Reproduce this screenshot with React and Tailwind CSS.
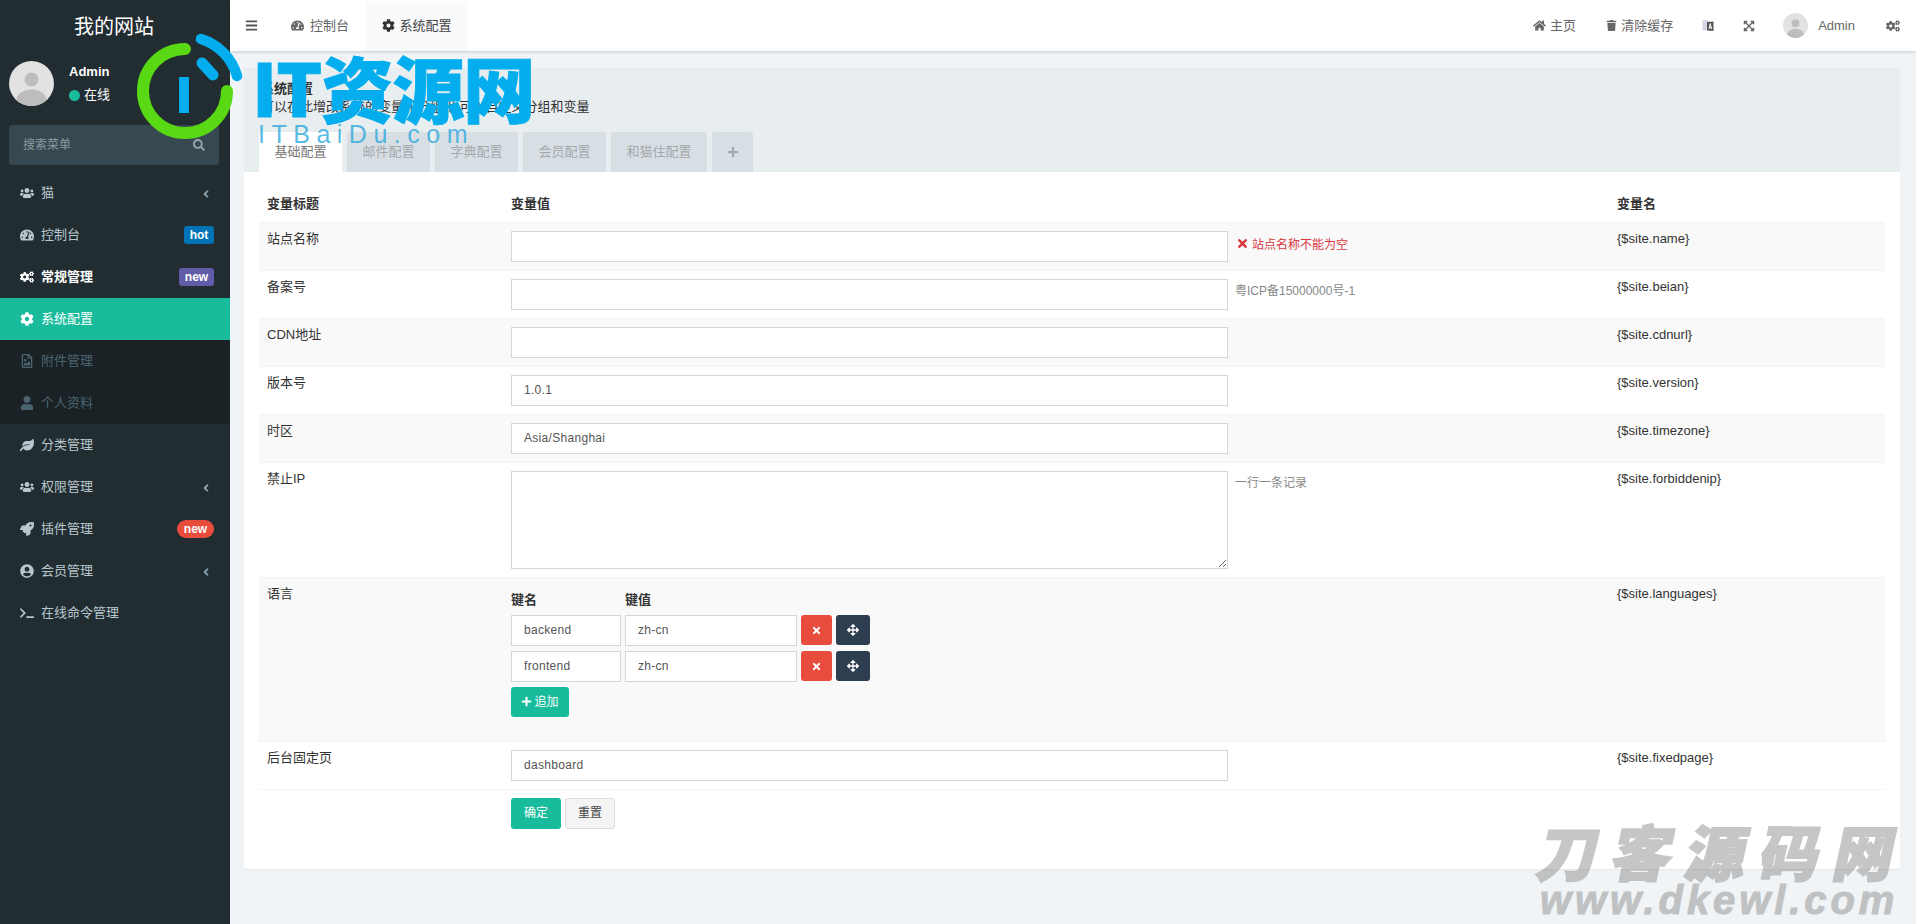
import {
  FaAngleLeft, FaArrowsAlt, FaBars, FaCog, FaCogs, FaExpandArrowsAlt, FaHome, FaLeaf,
  FaPlus, FaRegFileImage, FaRocket, FaSearch, FaTachometerAlt, FaTerminal, FaTimes, FaTrash,
  FaUser, FaUserCircle, FaUsers,
} from 'react-icons/fa';

const menu = [
  { icon: FaUsers, label: '猫', arrow: true },
  { icon: FaTachometerAlt, label: '控制台', badge: 'hot', badgeClass: 'bg-[#0073b7] w-[30px] rounded-[3px]' },
  { icon: FaCogs, label: '常规管理', white: true, badge: 'new', badgeClass: 'bg-[#605ca8] w-[35px] rounded-[3px]' },
  { icon: FaCog, label: '系统配置', active: true },
  { icon: FaRegFileImage, label: '附件管理', sub: true },
  { icon: FaUser, label: '个人资料', sub: true },
  { icon: FaLeaf, label: '分类管理' },
  { icon: FaUsers, label: '权限管理', arrow: true },
  { icon: FaRocket, label: '插件管理', badge: 'new', badgeClass: 'bg-[#e74c3c] w-[37px] rounded-full' },
  { icon: FaUserCircle, label: '会员管理', arrow: true },
  { icon: FaTerminal, label: '在线命令管理' },
];

const tabs = [
  { label: '基础配置', w: 'w-[83px]', active: true },
  { label: '邮件配置', w: 'w-[83px]' },
  { label: '字典配置', w: 'w-[83px]' },
  { label: '会员配置', w: 'w-[83px]' },
  { label: '和猫住配置', w: 'w-[96px]' },
];

const inputClass = 'block h-[31px] w-full border border-[#d2d6de] bg-white px-3 text-xs tracking-[0.3px] text-[#555] outline-none';

function Avatar({ size }) {
  return (
    <svg width={size} height={size} viewBox="0 0 45 45" className="shrink-0 rounded-full">
      <rect width="45" height="45" fill="#e2e2e2" />
      <circle cx="22.5" cy="18.5" r="7" fill="#bdbdbd" />
      <ellipse cx="22.5" cy="39" rx="15" ry="10.5" fill="#bdbdbd" />
    </svg>
  );
}

// two overlapping cards, the fa-language icon of the old icon set
function LanguageIcon() {
  return (
    <svg width="12" height="13" viewBox="0 0 12 13" className="ml-[29px]">
      <path d="M0.5 1.5 L6 1 L6 11 L0.5 11.5 Z" fill="#d5d5e6" />
      <path d="M5 3 L11.5 2.5 L11.5 12 L5 11.5 Z" fill="#555" />
      <path d="M7 10 L8.3 4.5 L9.6 10 M7.5 8.3 L9.1 8.3" stroke="#fff" strokeWidth="1" fill="none" />
    </svg>
  );
}

function Sidebar() {
  return (
    <aside className="w-[230px] shrink-0 bg-[#222d32]">
      <div className="flex h-[50px] items-center justify-center pr-[2px] pt-[4px] text-xl text-white">我的网站</div>
      <div className="flex h-[75px] items-center pb-[8px] pl-[9px]">
        <Avatar size={45} />
        <div className="ml-[15px] text-[13px] text-white">
          <div className="font-bold leading-[18px]">Admin</div>
          <div className="mt-[5px] flex items-center leading-[18px]">
            <span className="mr-[4px] h-[11px] w-[11px] rounded-full bg-[#18bc9c]" />
            在线
          </div>
        </div>
      </div>
      <div className="ml-[9px] mr-[11px] flex h-[40px] items-center justify-between rounded-[3px] bg-[#374850] pl-[14px] pr-[14px] text-xs text-[#8d9ba2]">
        搜索菜单
        <FaSearch size={12} className="text-[#97a5ab]" />
      </div>
      <ul className="mt-[7px]">
        {menu.map((item) => {
          const Icon = item.icon;
          let color = 'text-[#b8c7ce]';
          if (item.active) color = 'bg-[#18bc9c] text-white';
          else if (item.white) color = 'text-white font-bold';
          else if (item.sub) color = 'bg-[#1a2226] text-[#4b646f]';
          return (
            <li key={item.label} className={`flex h-[42px] items-center pl-[20px] pr-[16px] text-[13px] ${color}`}>
              <span className="flex w-[21px] shrink-0 items-center">
                <Icon size={14} />
              </span>
              <span>{item.label}</span>
              {item.arrow && <FaAngleLeft size={12} className="ml-auto mr-[2px] mt-[2px] text-[#8aa4af]" />}
              {item.badge && (
                <span className={`ml-auto flex h-[18px] items-center justify-center text-xs font-bold text-white ${item.badgeClass}`}>
                  {item.badge}
                </span>
              )}
            </li>
          );
        })}
      </ul>
    </aside>
  );
}

function TopBar() {
  return (
    <header className="relative flex h-[51px] shrink-0 items-center bg-white text-[13px] text-[#666] shadow-[0_1px_3px_rgba(0,0,0,0.18)]">
      <FaBars size={13} className="ml-[15px] text-[#555]" />
      <div className="ml-[33px] flex items-center">
        <FaTachometerAlt size={13} className="mr-[6px]" />
        控制台
      </div>
      <div className="ml-[16px] flex h-[50px] w-[103px] items-center justify-center bg-[#f9fafb] text-[#444]">
        <FaCog size={13} className="mr-[5px] text-[#333]" />
        系统配置
      </div>
      <div className="ml-auto flex items-center pr-[16px]">
        <FaHome size={13} className="mr-[4px]" />
        主页
        <FaTrash size={11} className="ml-[30px] mr-[4px]" />
        清除缓存
        <LanguageIcon />
        <FaExpandArrowsAlt size={12} className="ml-[29px]" />
        <span className="ml-[28px] mr-[10px]">
          <Avatar size={25} />
        </span>
        Admin
        <FaCogs size={14} className="ml-[31px]" />
      </div>
    </header>
  );
}

function Row({ title, name, tip, error, children, striped }) {
  return (
    <tr className={`border-t border-[#f4f4f4] align-top ${striped ? 'bg-[#f9f9f9]' : ''}`}>
      <td className="px-2 pb-2 pt-[6px]">{title}</td>
      <td className="p-2">
        <div className="flex">
          <div className="w-[717px] shrink-0">{children}</div>
          {error && (
            <div className="ml-[8px] flex h-[22px] items-end text-xs text-[#d9363e]">
              <FaTimes size={13} className="mb-[3px] mr-[3px]" />
              {error}
            </div>
          )}
          {tip && <div className="ml-[7px] pt-[4px] text-xs text-[#888]">{tip}</div>}
        </div>
      </td>
      <td className="px-2 pb-2 pt-[6px]">{name}</td>
    </tr>
  );
}

function KeyValue({ k, v }) {
  return (
    <div className="mb-[5px] flex items-center">
      <input className={`${inputClass} !w-[110px]`} defaultValue={k} />
      <input className={`${inputClass} ml-[4px] !w-[172px]`} defaultValue={v} />
      <button className="ml-[4px] flex h-[30px] w-[31px] items-center justify-center rounded-[3px] bg-[#e74c3c] text-white">
        <FaTimes size={11} />
      </button>
      <button className="ml-[4px] flex h-[30px] w-[34px] items-center justify-center rounded-[3px] bg-[#2c3e50] text-white">
        <FaArrowsAlt size={12} />
      </button>
    </div>
  );
}

function ConfigTable() {
  return (
    <table className="w-full border-collapse text-[13px] text-[#333]">
      <colgroup>
        <col className="w-[244px]" />
        <col />
        <col className="w-[276px]" />
      </colgroup>
      <thead>
        <tr className="text-left">
          <th className="h-[35px] px-2 pb-[2px] font-bold">变量标题</th>
          <th className="px-2 pb-[2px] font-bold">变量值</th>
          <th className="px-2 pb-[2px] font-bold">变量名</th>
        </tr>
      </thead>
      <tbody>
        <Row striped title="站点名称" name="{$site.name}" error="站点名称不能为空">
          <input className={inputClass} />
        </Row>
        <Row title="备案号" name="{$site.beian}" tip="粤ICP备15000000号-1">
          <input className={inputClass} />
        </Row>
        <Row striped title="CDN地址" name="{$site.cdnurl}">
          <input className={inputClass} />
        </Row>
        <Row title="版本号" name="{$site.version}">
          <input className={inputClass} defaultValue="1.0.1" />
        </Row>
        <Row striped title="时区" name="{$site.timezone}">
          <input className={inputClass} defaultValue="Asia/Shanghai" />
        </Row>
        <Row title="禁止IP" name="{$site.forbiddenip}" tip="一行一条记录">
          <textarea className={`${inputClass} !h-[98px] py-2`} />
        </Row>
        <Row striped title="语言" name="{$site.languages}">
          <div className="h-[147px] w-[400px]">
            <div className="flex h-[25px] items-end pb-[1px] font-bold">
              <span className="w-[114px]">键名</span>
              <span>键值</span>
            </div>
            <div className="mt-[4px]">
              <KeyValue k="backend" v="zh-cn" />
              <KeyValue k="frontend" v="zh-cn" />
            </div>
            <button className="flex h-[30px] w-[58px] items-center justify-center rounded-[3px] bg-[#18bc9c] text-xs text-white">
              <FaPlus size={11} className="mr-[2px]" />
              追加
            </button>
          </div>
        </Row>
        <Row title="后台固定页" name="{$site.fixedpage}">
          <input className={inputClass} defaultValue="dashboard" />
        </Row>
        <tr className="border-t border-[#f4f4f4]">
          <td className="p-2" />
          <td className="p-2">
            <div className="flex">
              <button className="h-[31px] w-[50px] rounded-[3px] bg-[#18bc9c] text-xs text-white">确定</button>
              <button className="ml-[4px] h-[31px] w-[50px] rounded-[3px] border border-[#ddd] bg-[#f4f4f4] text-xs text-[#444]">重置</button>
            </div>
          </td>
          <td className="p-2" />
        </tr>
      </tbody>
    </table>
  );
}

function Watermarks() {
  return (
    <>
      {/* IT资源网 logo stamped over the top-left of the page */}
      <div className="pointer-events-none absolute left-[130px] top-[30px]">
        <svg width="120" height="125" viewBox="130 30 120 125" fill="none">
          <path d="M185 49 A42 42 0 1 0 227 91" stroke="#58d914" strokeWidth="12" strokeLinecap="round" />
          <path d="M201 39 A54 54 0 0 1 237 76" stroke="#04aeee" strokeWidth="10.5" strokeLinecap="round" />
          <path d="M202 63 L213 75" stroke="#04aeee" strokeWidth="11" strokeLinecap="round" />
          <rect x="179" y="77" width="10" height="36" fill="#04aeee" />
        </svg>
      </div>
      <div className="pointer-events-none absolute left-[252px] top-[38px] font-['Noto_Sans_CJK_SC',sans-serif] text-[72px] font-black leading-[96px] tracking-[-1px] text-[#04aeee] [-webkit-text-stroke:1px_#04aeee]">
        IT资源网
      </div>
      <div className="pointer-events-none absolute left-[258px] top-[120px] text-[25px] leading-[28px] tracking-[6.5px] text-[#2da8dc]/80">
        ITBaiDu.com
      </div>
      {/* 刀客源码网 stamp bottom-right */}
      <div className="pointer-events-none absolute left-[1540px] top-[810px] -skew-x-12 font-['Noto_Sans_CJK_SC',sans-serif] text-[60px] font-black leading-[80px] tracking-[14px] text-[#8f8f8f] opacity-50 [-webkit-text-stroke:2px_#8f8f8f]">
        刀客源码网
      </div>
      <div className="pointer-events-none absolute left-[1540px] top-[878px] text-[40px] font-bold italic leading-[44px] tracking-[3.9px] text-[#8f8f8f] opacity-50 [-webkit-text-stroke:1px_#8f8f8f]">
        www.dkewl.com
      </div>
    </>
  );
}

export default function App() {
  return (
    <div className="relative flex h-[924px] overflow-hidden bg-[#f1f4f6] font-['Liberation_Sans','Noto_Sans_CJK_SC',sans-serif] text-[13px]">
      <Sidebar />
      <main className="flex min-w-0 flex-1 flex-col">
        <TopBar />
        <div className="pl-[14px] pr-[16px] pt-[17px]">
          <div className="rounded-[3px] bg-white shadow-[0_1px_1px_rgba(0,0,0,0.05)]">
            <div className="bg-[#e8edf0] px-[15px] pt-[11px]">
              <div className="pl-[2px] text-[#333]">
                <div className="text-[13px] font-bold leading-[20px]">系统配置</div>
                <div className="leading-[15px]">可以在此增改系统的变量和分组,也可以自定义分组和变量</div>
              </div>
              <div className="mt-[18px] flex gap-[5px] text-[13px]">
                {tabs.map((tab) => (
                  <div
                    key={tab.label}
                    className={`flex h-[40px] items-center justify-center rounded-t-[3px] ${tab.w} ${
                      tab.active ? 'bg-white text-[#777]' : 'bg-[#d8dfe4] text-[#a3a9ad]'
                    }`}
                  >
                    {tab.label}
                  </div>
                ))}
                <div className="flex h-[40px] w-[41px] items-center justify-center rounded-t-[3px] bg-[#d8dfe4] text-[#a3a9ad]">
                  <FaPlus size={12} />
                </div>
              </div>
            </div>
            <div className="h-[697px] p-[15px]">
              <ConfigTable />
            </div>
          </div>
        </div>
      </main>
      <Watermarks />
    </div>
  );
}
